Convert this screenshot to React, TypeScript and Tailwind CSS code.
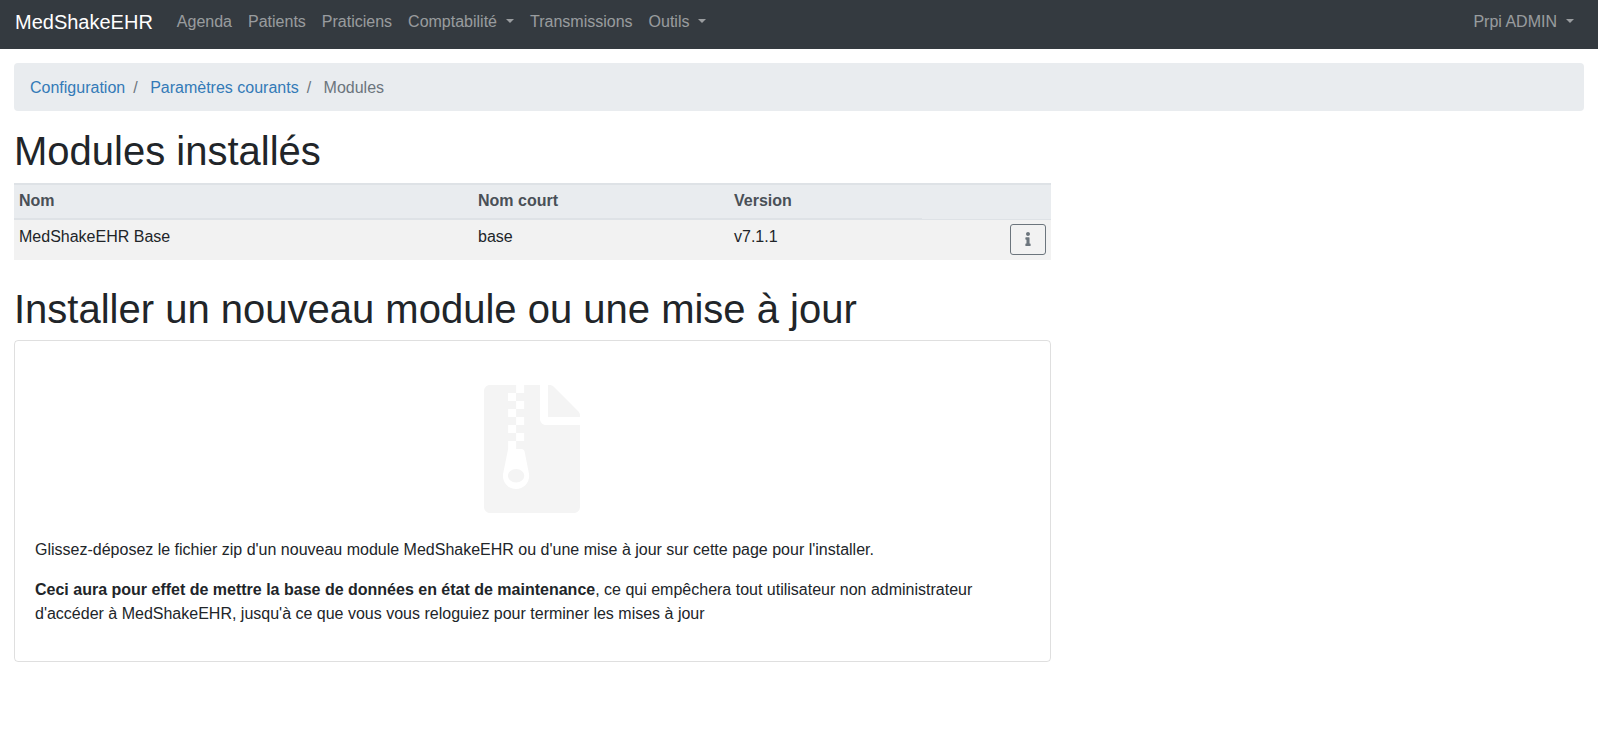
import { FaFileArchive, FaInfo } from "react-icons/fa";

function Caret() {
  return <span className="ml-[9px] inline-block align-[4px] border-t-4 border-x-4 border-x-transparent border-t-current" />;
}

function NavItem({ label, caret }: { label: string; caret?: boolean }) {
  return (
    <a className="px-2 py-2 text-[rgba(255,255,255,0.5)] leading-6 whitespace-nowrap">
      {label}
      {caret && <Caret />}
    </a>
  );
}

export default function App() {
  return (
    <div className="min-h-[732px] bg-white text-[#212529] text-base leading-6 font-['Liberation_Sans',Arial,sans-serif]">
      <nav className="h-[49px] bg-[#343a40] flex items-center justify-between pl-[15px] pr-4 pb-[6px]">
        <div className="flex items-center">
          <a className="text-white text-xl leading-[30px] mr-4 whitespace-nowrap">MedShakeEHR</a>
          <NavItem label="Agenda" />
          <NavItem label="Patients" />
          <NavItem label="Praticiens" />
          <NavItem label="Comptabilité" caret />
          <NavItem label="Transmissions" />
          <NavItem label="Outils" caret />
        </div>
        <NavItem label="Prpi ADMIN" caret />
      </nav>
      <main className="px-[14px] pt-[14px]">
        <ol className="flex h-12 items-center rounded bg-[#e9ecef] px-4 pt-0.5 mb-4">
          <li className="text-[#337ab7]">Configuration</li>
          <li className="text-[#6c757d] pl-2 pr-[12.5px]">/</li>
          <li className="text-[#337ab7]">Paramètres courants</li>
          <li className="text-[#6c757d] pl-2 pr-[12.5px]">/</li>
          <li className="text-[#6c757d]">Modules</li>
        </ol>
        <div className="w-[1037px]">
          <h1 className="text-[40px] leading-[48px] font-normal mb-2">Modules installés</h1>
          <table className="w-full border-collapse table-fixed mb-[25px]">
            <thead>
              <tr className="bg-[#e9ecef] text-[#495057] border-t-2 border-[#dee2e6]">
                <th className="w-[459px] h-[35px] px-[5px] pb-[2px] text-left font-bold border-b-2 border-[#dee2e6]">Nom</th>
                <th className="w-[256px] px-[5px] pb-[2px] text-left font-bold border-b-2 border-[#dee2e6]">Nom court</th>
                <th className="w-[193px] px-[5px] pb-[2px] text-left font-bold border-b-2 border-[#dee2e6]">Version</th>
                <th className="border-b border-[#dee2e6]" />
              </tr>
            </thead>
            <tbody>
              <tr className="bg-[#f2f2f2]">
                <td className="px-[5px] h-[41px] pt-[5px] align-top">MedShakeEHR Base</td>
                <td className="px-[5px] pt-[5px] align-top">base</td>
                <td className="px-[5px] pt-[5px] align-top">v7.1.1</td>
                <td className="px-[5px] pt-1 align-top text-right">
                  <button className="inline-flex w-[36px] h-[31px] items-center justify-center rounded-[3px] border border-[#6c757d] text-[#6c757d] align-top">
                    <FaInfo className="text-sm" />
                  </button>
                </td>
              </tr>
            </tbody>
          </table>
          <h1 className="text-[40px] leading-[48px] font-normal mb-[7px]">Installer un nouveau module ou une mise à jour</h1>
          <div className="rounded border border-[rgba(0,0,0,0.125)] px-5 pt-5 pb-5 h-[322px]">
            <div className="flex justify-center pt-[24px] pr-0.5">
              <FaFileArchive className="w-24 h-32 text-[#f4f4f4]" />
            </div>
            <p className="mt-[25px] mb-4">Glissez-déposez le fichier zip d'un nouveau module MedShakeEHR ou d'une mise à jour sur cette page pour l'installer.</p>
            <p>
              <strong className="font-bold">Ceci aura pour effet de mettre la base de données en état de maintenance</strong>, ce qui empêchera tout utilisateur non administrateur d'accéder à MedShakeEHR, jusqu'à ce que vous vous reloguiez pour terminer les mises à jour
            </p>
          </div>
        </div>
      </main>
    </div>
  );
}
